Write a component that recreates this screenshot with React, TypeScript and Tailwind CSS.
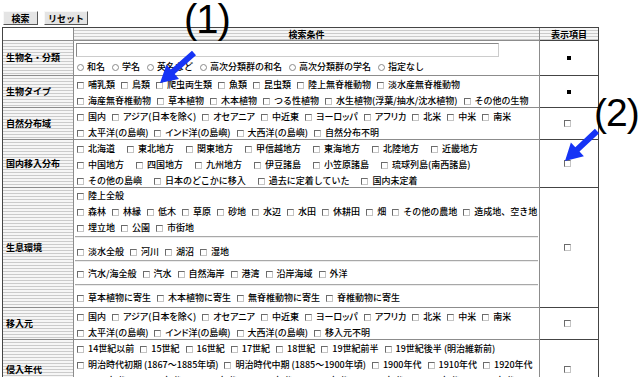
import React from 'react'

const stripe =
  'bg-[repeating-linear-gradient(180deg,#f6f6f6_0px,#f6f6f6_2px,#cbcbcb_2px,#cbcbcb_3px)]'

const Box = () => (
  <span className="inline-block w-[7px] h-[7px] shrink-0 mr-[4px] border border-t-[#6b6b6b] border-l-[#6b6b6b] border-r-[#c4c4c4] border-b-[#c4c4c4] bg-white" />
)

const Radio = () => (
  <span className="inline-block w-[7px] h-[7px] shrink-0 mr-[3px] rounded-full border border-[#8a8a8a] bg-white" />
)

// カタカナを含む項目はプロポーショナル詰め
const hasKana = (s: string) => /[ァ-ヶ]/.test(s)

const Check = ({ label, wide }: { label: string; wide?: boolean }) => (
  <span className={`inline-flex items-center ${wide ? 'mr-[12px]' : 'mr-[6px]'}`}>
    <Box />
    <span className={hasKana(label) ? "[font-feature-settings:'palt']" : ''}>{label}</span>
  </span>
)

const Lines = ({ rows, wide }: { rows: string[][]; wide?: boolean }) => (
  <>
    {rows.map((row, i) => (
      <div key={i} className="flex items-center h-[16px] whitespace-nowrap">
        {row.map((l) => (
          <Check key={l} label={l} wide={wide} />
        ))}
      </div>
    ))}
  </>
)

const bioType = [
  ['哺乳類', '鳥類', '爬虫両生類', '魚類', '昆虫類', '陸上無脊椎動物', '淡水産無脊椎動物'],
  ['海産無脊椎動物', '草本植物', '木本植物', 'つる性植物', '水生植物(浮葉/抽水/沈水植物)', 'その他の生物'],
]

const natural = [
  ['国内', 'アジア(日本を除く)', 'オセアニア', '中近東', 'ヨーロッパ', 'アフリカ', '北米', '中米', '南米'],
  ['太平洋(の島嶼)', 'インド洋(の島嶼)', '大西洋(の島嶼)', '自然分布不明'],
]

const domestic = [
  ['北海道', '東北地方', '関東地方', '甲信越地方', '東海地方', '北陸地方', '近畿地方'],
  ['中国地方', '四国地方', '九州地方', '伊豆諸島', '小笠原諸島', '琉球列島(南西諸島)'],
  ['その他の島嶼', '日本のどこかに移入', '過去に定着していた', '国内未定着'],
]

const land = [
  ['陸上全般'],
  ['森林', '林縁', '低木', '草原', '砂地', '水辺', '水田', '休耕田', '畑', 'その他の農地', '造成地、空き地'],
  ['埋立地', '公園', '市街地'],
]

const source = [
  ['国内', 'アジア(日本を除く)', 'オセアニア', '中近東', 'ヨーロッパ', 'アフリカ', '北米', '中米', '南米'],
  ['太平洋(の島嶼)', 'インド洋(の島嶼)', '大西洋(の島嶼)', '移入元不明'],
]

const era = [
  ['14世紀以前', '15世紀', '16世紀', '17世紀', '18世紀', '19世紀前半', '19世紀後半 (明治維新前)'],
  ['明治時代初期 (1867～1885年頃)', '明治時代中期 (1885～1900年頃)', '1900年代', '1910年代', '1920年代'],
  ['1930年代', '1940年代', '1950年代', '1960年代', '1970年代', '1980年代', '1990年代', '2000年代'],
]

const Label = ({ text }: { text: string }) => (
  <div className={`flex items-center pl-[3px] font-bold border-r border-b border-[#8c8c8c] ${stripe}`}>
    {text}
  </div>
)

const Cond = ({ children }: { children: React.ReactNode }) => (
  <div className="pl-[3px] pt-[1px] border-r border-b border-[#8c8c8c] overflow-hidden">{children}</div>
)

const Show = ({ on }: { on?: boolean }) => (
  <div className="flex items-center justify-center border-r border-b border-[#444]">
    {on ? <span className="w-[4px] h-[4px] bg-black" /> : <Box />}
  </div>
)

const Sep = () => <div className="h-[2px] border-t border-[#a8a8a8] border-b border-b-[#ececec] -ml-[2px] mr-[1px]" />

export default function App() {
  return (
    <div className="relative w-[640px] h-[377px] overflow-hidden bg-white font-['Noto_Sans_CJK_JP',sans-serif] font-medium text-[9px] leading-[16px] text-black">
      {/* ボタン */}
      <div className="flex gap-[6px] pl-[3px] pt-[11px] h-[27px]">
        <button className="w-[35px] h-[14px] flex items-center justify-center bg-[#e4e4e4] border border-t-[#f8f8f8] border-l-[#f8f8f8] border-r-[#555] border-b-[#555] text-[9px] leading-none font-bold">
          検索
        </button>
        <button className="w-[44px] h-[14px] flex items-center justify-center bg-[#e4e4e4] border border-t-[#f8f8f8] border-l-[#f8f8f8] border-r-[#555] border-b-[#555] text-[9px] leading-none font-bold">
          リセット
        </button>
      </div>

      {/* 検索テーブル */}
      <div className="ml-[2px] w-[597px] grid grid-cols-[71px_466px_59px] grid-rows-[13px_35px_32px_32px_48px_120px_32px_60px] border-t border-l border-[#444]">
        <div className="border-r border-b border-[#8c8c8c] bg-white" />
        <div className={`flex items-center justify-center font-bold leading-none border-r border-b border-[#8c8c8c] ${stripe}`}>
          検索条件
        </div>
        <div className={`flex items-center justify-center font-bold leading-none border-r border-b border-[#444] ${stripe}`}>
          表示項目
        </div>

        <Label text="生物名・分類" />
        <div className="pl-[2px] pt-[2px] border-r border-b border-[#8c8c8c]">
          <div className="w-[423px] h-[14px] border border-t-[#888] border-l-[#888] border-r-[#ccc] border-b-[#ccc] bg-white" />
          <div className="flex items-center h-[16px] mt-[2px] pl-[1px] whitespace-nowrap">
            {['和名', '学名', '英名など', '高次分類群の和名', '高次分類群の学名', '指定なし'].map((l) => (
              <span key={l} className="inline-flex items-center mr-[7px]">
                <Radio />
                {l}
              </span>
            ))}
          </div>
        </div>
        <Show on />

        <Label text="生物タイプ" />
        <Cond>
          <Lines rows={bioType} />
        </Cond>
        <Show on />

        <Label text="自然分布域" />
        <Cond>
          <Lines rows={natural} />
        </Cond>
        <Show />

        <Label text="国内移入分布" />
        <Cond>
          <Lines rows={domestic} wide />
        </Cond>
        <Show />

        <Label text="生息環境" />
        <div className="pl-[3px] border-r border-b border-[#8c8c8c] overflow-hidden flex flex-col">
          <div className="h-[48px]">
            <Lines rows={land} />
          </div>
          <Sep />
          <div className="h-[22px] pt-[6px]">
            <Lines rows={[['淡水全般', '河川', '湖沼', '湿地']]} />
          </div>
          <Sep />
          <div className="h-[22px] pt-[4px]">
            <Lines rows={[['汽水/海全般', '汽水', '自然海岸', '港湾', '沿岸海域', '外洋']]} />
          </div>
          <Sep />
          <div className="pt-[4px]">
            <Lines rows={[['草本植物に寄生', '木本植物に寄生', '無脊椎動物に寄生', '脊椎動物に寄生']]} />
          </div>
        </div>
        <Show />

        <Label text="移入元" />
        <Cond>
          <Lines rows={source} />
        </Cond>
        <Show />

        <Label text="侵入年代" />
        <Cond>
          <Lines rows={era} />
        </Cond>
        <Show />
      </div>

      {/* 注釈 */}
      <div className="absolute left-[184px] top-[-1px] font-['Liberation_Sans',Arial,sans-serif] font-normal text-[40px] leading-none tracking-[-1px] text-black">
        (1)
      </div>
      <div className="absolute left-[594px] top-[93px] font-['Liberation_Sans',Arial,sans-serif] font-normal text-[39px] leading-none tracking-[-1px] text-black">
        (2)
      </div>
      <svg className="absolute left-0 top-0 pointer-events-none" width="640" height="377" viewBox="0 0 640 377">
        <polygon
          fill="#1634f5"
          points="196,55.3 174.7,74 179,78.9 160,83 166.5,64.6 170.8,69.5 192,50.75"
        />
        <polygon
          fill="#1634f5"
          points="599.1,133.2 579.5,151.6 583.9,156.3 565,161 570.9,142.5 575.3,147.2 594.9,128.8"
        />
      </svg>
    </div>
  )
}
